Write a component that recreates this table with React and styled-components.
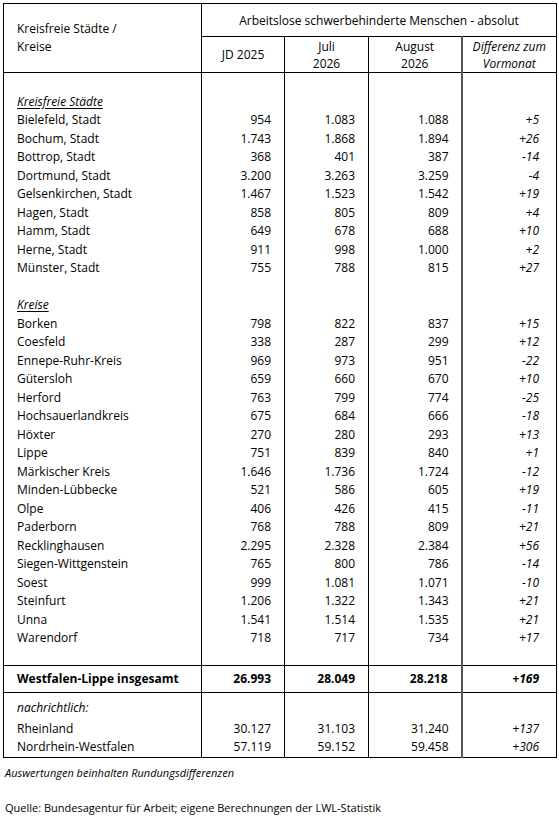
import React from 'react'
import styled, { createGlobalStyle } from 'styled-components'

const GlobalStyle = createGlobalStyle`
  body {
    margin: 0;
    padding: 3px;
    background: #fff;
    color: #000;
    font-family: "Open Sans", "Noto Sans", sans-serif;
  }
`

const staedte = [
  ['Bielefeld, Stadt', '954', '1.083', '1.088', '+5'],
  ['Bochum, Stadt', '1.743', '1.868', '1.894', '+26'],
  ['Bottrop, Stadt', '368', '401', '387', '-14'],
  ['Dortmund, Stadt', '3.200', '3.263', '3.259', '-4'],
  ['Gelsenkirchen, Stadt', '1.467', '1.523', '1.542', '+19'],
  ['Hagen, Stadt', '858', '805', '809', '+4'],
  ['Hamm, Stadt', '649', '678', '688', '+10'],
  ['Herne, Stadt', '911', '998', '1.000', '+2'],
  ['Münster, Stadt', '755', '788', '815', '+27'],
]

const kreise = [
  ['Borken', '798', '822', '837', '+15'],
  ['Coesfeld', '338', '287', '299', '+12'],
  ['Ennepe-Ruhr-Kreis', '969', '973', '951', '-22'],
  ['Gütersloh', '659', '660', '670', '+10'],
  ['Herford', '763', '799', '774', '-25'],
  ['Hochsauerlandkreis', '675', '684', '666', '-18'],
  ['Höxter', '270', '280', '293', '+13'],
  ['Lippe', '751', '839', '840', '+1'],
  ['Märkischer Kreis', '1.646', '1.736', '1.724', '-12'],
  ['Minden-Lübbecke', '521', '586', '605', '+19'],
  ['Olpe', '406', '426', '415', '-11'],
  ['Paderborn', '768', '788', '809', '+21'],
  ['Recklinghausen', '2.295', '2.328', '2.384', '+56'],
  ['Siegen-Wittgenstein', '765', '800', '786', '-14'],
  ['Soest', '999', '1.081', '1.071', '-10'],
  ['Steinfurt', '1.206', '1.322', '1.343', '+21'],
  ['Unna', '1.541', '1.514', '1.535', '+21'],
  ['Warendorf', '718', '717', '734', '+17'],
]

const nachrichtlich = [
  ['Rheinland', '30.127', '31.103', '31.240', '+137'],
  ['Nordrhein-Westfalen', '57.119', '59.152', '59.458', '+306'],
]

export default function App() {
  return (
    <>
      <GlobalStyle />
      <Table>
        <colgroup>
          <col style={{ width: 198 }} />
          <col style={{ width: 83 }} />
          <col style={{ width: 84 }} />
          <col style={{ width: 93 }} />
          <col style={{ width: 95 }} />
        </colgroup>
        <thead>
          <HeadRow $h={33}>
            <HeadCell rowSpan={2} $left>Kreisfreie Städte /<br />Kreise</HeadCell>
            <HeadCell colSpan={4}>Arbeitslose schwerbehinderte Menschen - absolut</HeadCell>
          </HeadRow>
          <HeadRow $h={36}>
            <HeadCell>JD 2025</HeadCell>
            <HeadCell>Juli<br />2026</HeadCell>
            <HeadCell>August<br />2026</HeadCell>
            <HeadCell $diff $italic>Differenz zum<br />Vormonat</HeadCell>
          </HeadRow>
        </thead>
        <Section>
          <Spacer h={20} />
          <GroupRow label="Kreisfreie Städte" />
          {staedte.map(r => <DataRow key={r[0]} row={r} />)}
          <Spacer h={18.5} />
          <GroupRow label="Kreise" />
          {kreise.map(r => <DataRow key={r[0]} row={r} />)}
          <Spacer h={18} />
        </Section>
        <Section>
          <Row $h={27}>
            <Label $bold>Westfalen-Lippe insgesamt</Label>
            <Num $bold>26.993</Num>
            <Num $bold>28.049</Num>
            <Num $bold>28.218</Num>
            <Num $bold $diff $italic>+169</Num>
          </Row>
        </Section>
        <Section>
          <Spacer h={6} />
          <Row $h={18.5}>
            <Label $italic>nachrichtlich:</Label>
            <Num />
            <Num />
            <Num />
            <Num $diff />
          </Row>
          <Spacer h={2.5} />
          {nachrichtlich.map(r => <DataRow key={r[0]} row={r} />)}
          <Spacer h={1} />
        </Section>
      </Table>
      <Note>Auswertungen beinhalten Rundungsdifferenzen</Note>
      <Source>Quelle: Bundesagentur für Arbeit; eigene Berechnungen der LWL-Statistik</Source>
    </>
  )
}

function DataRow({ row }) {
  return (
    <Row $h={18.5}>
      <Label>{row[0]}</Label>
      <Num>{row[1]}</Num>
      <Num>{row[2]}</Num>
      <Num $pr={12}>{row[3]}</Num>
      <Num $diff $italic>{row[4]}</Num>
    </Row>
  )
}

function GroupRow({ label }) {
  return (
    <Row $h={18.5}>
      <Label $italic $underline>{label}</Label>
      <Num />
      <Num />
      <Num />
      <Num $diff />
    </Row>
  )
}

function Spacer({ h }) {
  return (
    <Row $h={h}>
      <Num />
      <Num />
      <Num />
      <Num />
      <Num $diff />
    </Row>
  )
}

const Table = styled.table`
  border-collapse: collapse;
  table-layout: fixed;
  width: 553px;
  border: 1.5px solid #000;
  font-size: 12px;
`

const Section = styled.tbody`
  border-top: 1.5px solid #000;
`

const HeadRow = styled.tr`
  height: ${p => p.$h}px;
`

const HeadCell = styled.th`
  font-weight: 400;
  font-style: ${p => (p.$italic ? 'italic' : 'normal')};
  text-align: ${p => (p.$left ? 'left' : 'center')};
  vertical-align: middle;
  line-height: 17px;
  padding: ${p => (p.$left ? '0 0 0 13px' : '0')};
  border: 1.5px solid #000;
  border-left: ${p => (p.$diff ? '2px solid #555' : '1.5px solid #000')};
  ${p => p.$left && 'line-height: 18px;'}
`

const Row = styled.tr`
  height: ${p => p.$h}px;
`

const Label = styled.td`
  padding: 0 0 0 13px;
  line-height: 18px;
  white-space: nowrap;
  font-weight: ${p => (p.$bold ? 700 : 400)};
  font-style: ${p => (p.$italic ? 'italic' : 'normal')};
  text-decoration: ${p => (p.$underline ? 'underline' : 'none')};
  text-underline-offset: 2px;
  border-right: 1.5px solid #000;
`

const Num = styled.td`
  padding: 0 ${p => (p.$diff ? 17 : p.$pr || 13)}px 0 0;
  line-height: 18px;
  text-align: right;
  white-space: nowrap;
  font-weight: ${p => (p.$bold ? 700 : 400)};
  font-style: ${p => (p.$italic ? 'italic' : 'normal')};
  border-left: ${p => (p.$diff ? '2px solid #555' : '1.5px solid #000')};
`

const Note = styled.div`
  margin-top: 7px;
  padding-left: 2px;
  font-size: 11px;
  font-style: italic;
  line-height: 15px;
`

const Source = styled.div`
  margin-top: 20px;
  padding-left: 2px;
  font-size: 11px;
  line-height: 15px;
`
